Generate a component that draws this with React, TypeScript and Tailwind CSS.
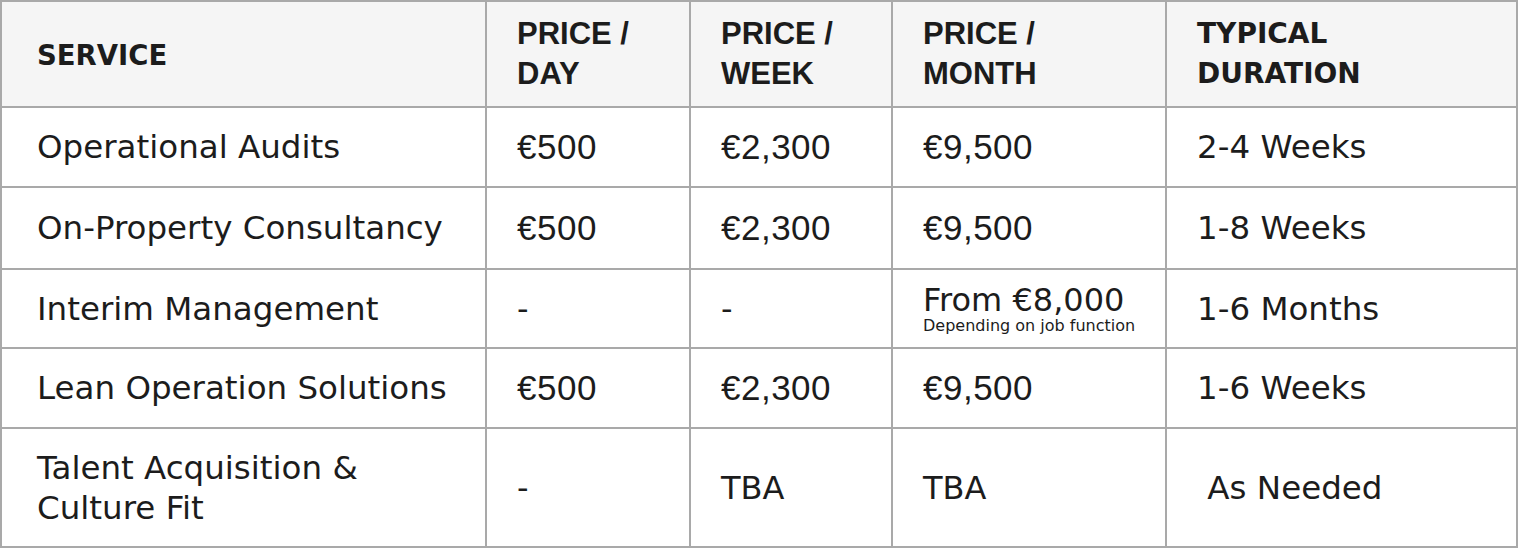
const rows: { service: string[]; day: string; week: string; month: string; sub?: string; duration: string }[] = [
  { service: ["Operational Audits"], day: "€500", week: "€2,300", month: "€9,500", duration: "2-4 Weeks" },
  { service: ["On-Property Consultancy"], day: "€500", week: "€2,300", month: "€9,500", duration: "1-8 Weeks" },
  { service: ["Interim Management"], day: "-", week: "-", month: "From €8,000", sub: "Depending on job function", duration: "1-6 Months" },
  { service: ["Lean Operation Solutions"], day: "€500", week: "€2,300", month: "€9,500", duration: "1-6 Weeks" },
  { service: ["Talent Acquisition &", "Culture Fit"], day: "-", week: "TBA", month: "TBA", duration: " As Needed" },
];

const rowHeights = ["h-[80px]", "h-[82px]", "h-[79px]", "h-[80px]", "h-[119px]"];

const poppins = "[font-family:'DejaVu_Sans','Noto_Sans',sans-serif]";
const arial = "[font-family:'Liberation_Sans',Arial,sans-serif]";

function Cell({ children, className = "" }: { children: React.ReactNode; className?: string }) {
  return (
    <div className={`border-r-2 border-b-2 border-[#a9a9a9] flex flex-col justify-center pl-[30px] ${className}`}>
      {children}
    </div>
  );
}

function Price({ value }: { value: string }) {
  const isEuro = value.startsWith("€");
  return (
    <span className={isEuro ? `${arial} text-[35px] leading-[40px] tracking-[0.5px]` : `${poppins} text-[32px] leading-[40px]`}>
      {value}
    </span>
  );
}

export default function App() {
  return (
    <div className="w-[1518px] h-[548px] bg-white text-[#1c1c1c] overflow-hidden">
      <div className="grid grid-cols-[485px_204px_202px_274px_351px] border-t-2 border-l-2 border-[#a9a9a9]">
        <Cell className={`h-[106px] bg-[#f5f5f5] pl-[35px] pt-[2px] ${poppins} font-bold text-[27.5px] leading-[40px]`}>SERVICE</Cell>
        <Cell className={`h-[106px] bg-[#f5f5f5] ${arial} font-bold text-[31px] leading-[40px]`}>
          <span>PRICE /</span>
          <span>DAY</span>
        </Cell>
        <Cell className={`h-[106px] bg-[#f5f5f5] ${arial} font-bold text-[31px] leading-[40px]`}>
          <span>PRICE /</span>
          <span>WEEK</span>
        </Cell>
        <Cell className={`h-[106px] bg-[#f5f5f5] ${arial} font-bold text-[31px] leading-[40px]`}>
          <span>PRICE /</span>
          <span>MONTH</span>
        </Cell>
        <Cell className={`h-[106px] bg-[#f5f5f5] ${poppins} font-bold text-[28px] leading-[40px]`}>
          <span>TYPICAL</span>
          <span>DURATION</span>
        </Cell>

        {rows.map((r, i) => (
          <div key={i} className="contents">
            <Cell className={`${rowHeights[i]} pl-[35px] ${poppins} text-[32.5px] leading-[40px]`}>
              {r.service.map((s) => (
                <span key={s}>{s}</span>
              ))}
            </Cell>
            <Cell className={rowHeights[i]}>
              <Price value={r.day} />
            </Cell>
            <Cell className={rowHeights[i]}>
              <Price value={r.week} />
            </Cell>
            <Cell className={rowHeights[i]}>
              {r.sub ? (
                <>
                  <span className={`${poppins} text-[32px] leading-[32px] pt-[2px]`}>{r.month}</span>
                  <span className={`${poppins} text-[16px] leading-[20px]`}>{r.sub}</span>
                </>
              ) : (
                <Price value={r.month} />
              )}
            </Cell>
            <Cell className={`${rowHeights[i]} ${poppins} text-[32.5px] leading-[40px] whitespace-pre`}>{r.duration}</Cell>
          </div>
        ))}
      </div>
    </div>
  );
}
